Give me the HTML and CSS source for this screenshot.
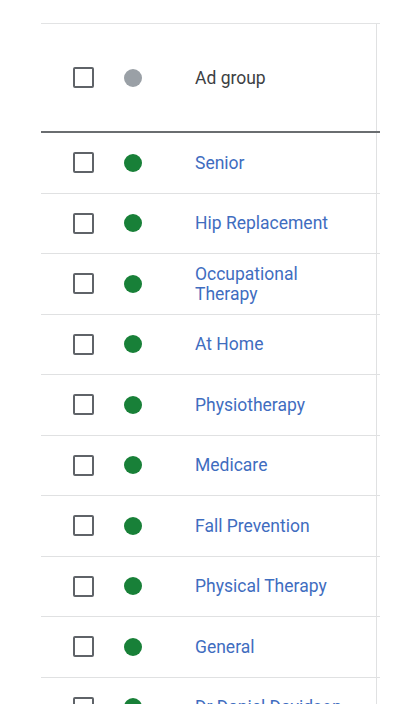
FILE: index.html
```html
<!DOCTYPE html>
<html>
<head>
<meta charset="utf-8">
<link rel="stylesheet" href="styles.css">
</head>
<body>
<div class="page">
  <div class="table">
    <div class="row head">
      <div class="c-check"><span class="box"></span></div>
      <div class="c-dot"><span class="dot grey"></span></div>
      <div class="c-name"><span class="title">Ad group</span></div>
      <div class="c-tail"></div>
    </div>
    <div class="row">
      <div class="c-check"><span class="box"></span></div>
      <div class="c-dot"><span class="dot"></span></div>
      <div class="c-name"><a class="link">Senior</a></div>
      <div class="c-tail"></div>
    </div>
    <div class="row">
      <div class="c-check"><span class="box"></span></div>
      <div class="c-dot"><span class="dot"></span></div>
      <div class="c-name"><a class="link">Hip Replacement</a></div>
      <div class="c-tail"></div>
    </div>
    <div class="row">
      <div class="c-check"><span class="box"></span></div>
      <div class="c-dot"><span class="dot"></span></div>
      <div class="c-name"><a class="link">Occupational Therapy</a></div>
      <div class="c-tail"></div>
    </div>
    <div class="row">
      <div class="c-check"><span class="box"></span></div>
      <div class="c-dot"><span class="dot"></span></div>
      <div class="c-name"><a class="link">At Home</a></div>
      <div class="c-tail"></div>
    </div>
    <div class="row">
      <div class="c-check"><span class="box"></span></div>
      <div class="c-dot"><span class="dot"></span></div>
      <div class="c-name"><a class="link">Physiotherapy</a></div>
      <div class="c-tail"></div>
    </div>
    <div class="row">
      <div class="c-check"><span class="box"></span></div>
      <div class="c-dot"><span class="dot"></span></div>
      <div class="c-name"><a class="link">Medicare</a></div>
      <div class="c-tail"></div>
    </div>
    <div class="row">
      <div class="c-check"><span class="box"></span></div>
      <div class="c-dot"><span class="dot"></span></div>
      <div class="c-name"><a class="link">Fall Prevention</a></div>
      <div class="c-tail"></div>
    </div>
    <div class="row">
      <div class="c-check"><span class="box"></span></div>
      <div class="c-dot"><span class="dot"></span></div>
      <div class="c-name"><a class="link">Physical Therapy</a></div>
      <div class="c-tail"></div>
    </div>
    <div class="row">
      <div class="c-check"><span class="box"></span></div>
      <div class="c-dot"><span class="dot"></span></div>
      <div class="c-name"><a class="link">General</a></div>
      <div class="c-tail"></div>
    </div>
    <div class="row">
      <div class="c-check"><span class="box"></span></div>
      <div class="c-dot"><span class="dot"></span></div>
      <div class="c-name"><a class="link">Dr Daniel Davidson</a></div>
      <div class="c-tail"></div>
    </div>
  </div>
</div>
</body>
</html>
```
FILE: styles.css
```css
html, body {
  margin: 0;
  padding: 0;
  background: #ffffff;
}

.page {
  padding: 23px 0 0 41px;
  font-family: Roboto, "Liberation Sans", Arial, sans-serif;
}

.table {
  width: 339px;
  height: 680px;
  overflow: hidden;
  border-top: 1px solid #e2e3e4;
}

.row {
  display: grid;
  grid-template-columns: 83px 18px 1fr 3px;
  height: 60.5px;
  box-sizing: border-box;
  border-bottom: 1px solid #e0e1e2;
}

.row.head {
  height: 109px;
  border-bottom: 2px solid #6a6d70;
}

.row > div {
  display: flex;
  align-items: center;
}

.c-check {
  justify-content: center;
}

.c-name {
  padding: 0 12px 0 53px;
  border-right: 1px solid #e0e1e2;
  font-size: 17.5px;
  line-height: 20px;
}

.box {
  width: 17px;
  height: 17px;
  border: 2.3px solid #5f6368;
  border-radius: 2px;
  box-sizing: content-box;
  margin-left: 1px;
}

.dot {
  width: 18px;
  height: 18px;
  border-radius: 50%;
  background: #188038;
}

.dot.grey {
  background: #9aa0a6;
}

.title {
  color: #3c4043;
  font-weight: 400;
}

.link {
  color: #3f6dbf;
  text-decoration: none;
}
```
